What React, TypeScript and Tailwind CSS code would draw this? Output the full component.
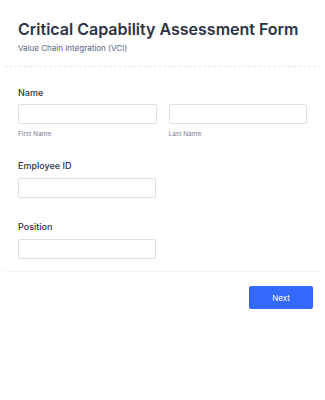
export default function App() {
  const font = { fontFamily: "Inter, 'Noto Sans', sans-serif" };
  return (
    <div className="w-[325px] h-[400px] bg-white px-[4px]" style={font}>
      <div className="px-[14px] pt-[19px] pb-[13px]">
        <h1 className="text-[16px] leading-[20px] font-semibold text-[#2c3345]">
          Critical Capability Assessment Form
        </h1>
        <p className="mt-[4px] text-[8px] leading-[10px] text-[#57647e]">Value Chain Integration (VCI)</p>
      </div>
      <div className="border-t border-dashed border-[#e3e5ea]" />
      <div className="px-[14px] pt-[20px]">
        <div>
          <label className="block text-[9px] leading-[12px] font-medium text-[#2c3345]">Name</label>
          <div className="mt-[5px] flex gap-[12px]">
            <div className="flex-1">
              <div className="h-[20px] rounded-[2px] border border-[#dcdfe8] bg-white" />
              <div className="mt-[6px] text-[6.5px] leading-[8px] text-[#7d8193]">First Name</div>
            </div>
            <div className="flex-1">
              <div className="h-[20px] rounded-[2px] border border-[#dcdfe8] bg-white" />
              <div className="mt-[6px] text-[6.5px] leading-[8px] text-[#7d8193]">Last Name</div>
            </div>
          </div>
        </div>
        <div className="mt-[22px]">
          <label className="block text-[9px] leading-[12px] font-medium text-[#2c3345]">Employee ID</label>
          <div className="mt-[6px] w-[138px] h-[20px] rounded-[2px] border border-[#dcdfe8] bg-white" />
        </div>
        <div className="mt-[23px]">
          <label className="block text-[9px] leading-[12px] font-medium text-[#2c3345]">Position</label>
          <div className="mt-[6px] w-[138px] h-[20px] rounded-[2px] border border-[#dcdfe8] bg-white" />
        </div>
      </div>
      <div className="mt-[12px] border-t border-[#f3f3f8]" />
      <div className="flex justify-end pr-[8px] pt-[14px]">
        <button className="w-[64px] h-[23px] rounded-[2px] bg-[#3469ff] text-white text-[8px]">Next</button>
      </div>
    </div>
  );
}
